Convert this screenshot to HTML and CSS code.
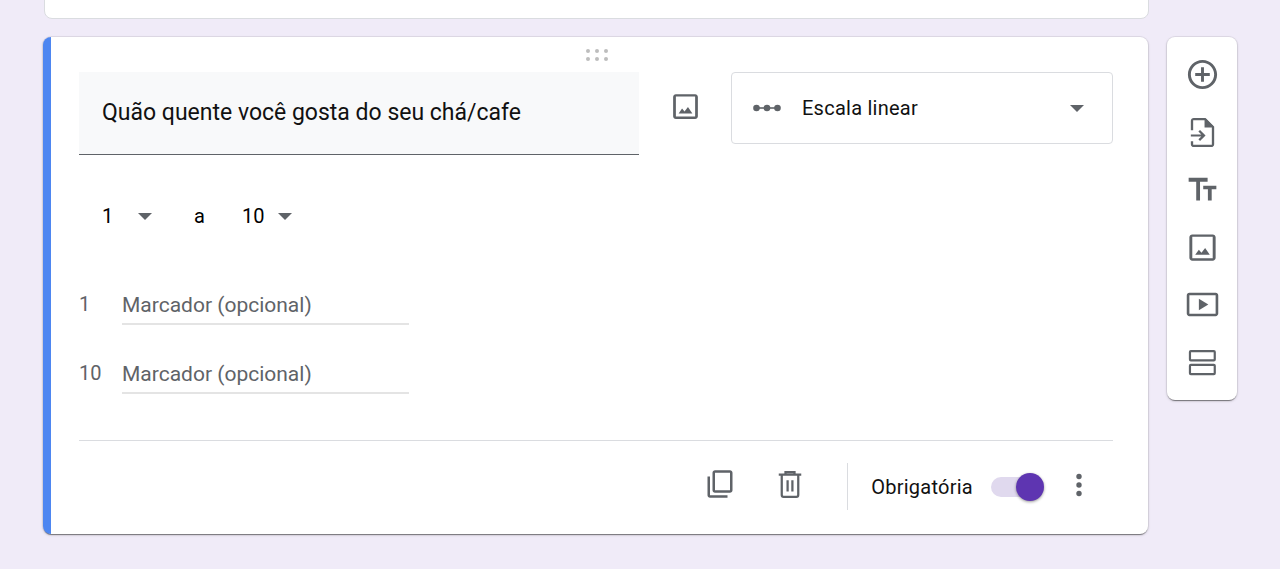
FILE: index.html
```html
<!DOCTYPE html>
<html lang="pt">
<head>
    <meta charset="UTF-8">
    <meta name="viewport" content="width=device-width, initial-scale=1.0">
    <title>Editar pergunta</title>
    <link rel="stylesheet" href="styles.css">
</head>
<body>
    <div class="previous-card"></div>

    <div class="editor">
        <div class="question-card">
            <div class="drag-handle">
                <svg width="24" height="14" viewBox="0 0 24 14">
                    <circle cx="3" cy="3" r="2"/><circle cx="12" cy="3" r="2"/><circle cx="21" cy="3" r="2"/>
                    <circle cx="3" cy="11" r="2"/><circle cx="12" cy="11" r="2"/><circle cx="21" cy="11" r="2"/>
                </svg>
            </div>

            <div class="title-row">
                <div class="title-field">Quão quente você gosta do seu chá/cafe</div>
                <button class="icon-btn title-image">
                    <svg class="icon" width="33" height="33" viewBox="0 0 24 24"><path d="M19 4.700v14.600H5V4.700h14M19 3H5c-1.100 0-2 .9-2 2v14c0 1.100.9 2 2 2h14c1.100 0 2-.9 2-2V5c0-1.100-.9-2-2-2z"/><path d="M13.800 12.300l-2.500 3.300-1.800-2.100L7 17h10z"/></svg>
                </button>
                <div class="type-select">
                    <svg class="icon" width="28" height="8" viewBox="0 0 28 8"><path d="M3 3.200h22v1.600H3z"/><circle cx="3.500" cy="4" r="3.300"/><circle cx="14" cy="4" r="3.300"/><circle cx="24.500" cy="4" r="3.300"/></svg>
                    <span class="type-name">Escala linear</span>
                    <span class="caret"></span>
                </div>
            </div>

            <div class="range-row">
                <span class="range-value">1</span>
                <span class="caret"></span>
                <span class="range-sep">a</span>
                <span class="range-value">10</span>
                <span class="caret"></span>
            </div>

            <div class="marker-row">
                <span class="marker-num">1</span>
                <div class="marker-input">Marcador (opcional)</div>
            </div>
            <div class="marker-row">
                <span class="marker-num">10</span>
                <div class="marker-input">Marcador (opcional)</div>
            </div>

            <div class="card-footer">
                <button class="icon-btn">
                    <svg class="icon" width="30" height="30" viewBox="0 0 24 24"><path d="M4 6H2v15c0 1.100.9 2 2 2h14v-2H4V6z"/><path d="M20 1H8c-1.100 0-2 .9-2 2v14c0 1.100.9 2 2 2h12c1.100 0 2-.9 2-2V3c0-1.100-.9-2-2-2zm0 16H8V3h12v14z"/></svg>
                </button>
                <button class="icon-btn">
                    <svg class="icon-line" width="36" height="36" viewBox="0 0 24 24"><path d="M6.500 6.500v12.800c0 .7.5 1.200 1.200 1.200h8.600c.7 0 1.200-.5 1.200-1.200V6.500M4.500 5.700h15M9 5.700V4h6v1.700M10.400 9.500v7.500M13.600 9.500v7.500"/></svg>
                </button>
                <div class="footer-divider"></div>
                <span class="required-label">Obrigatória</span>
                <div class="toggle"><span class="toggle-thumb"></span></div>
                <button class="icon-btn more-btn">
                    <svg class="icon" width="6" height="24" viewBox="0 0 6 24"><circle cx="3" cy="3.500" r="2.700"/><circle cx="3" cy="12" r="2.700"/><circle cx="3" cy="20.500" r="2.700"/></svg>
                </button>
            </div>
        </div>

        <div class="side-panel">
            <svg class="icon" width="35" height="35" viewBox="0 0 24 24"><path d="M13 7h-2v4H7v2h4v4h2v-4h4v-2h-4V7zm-1-5C6.480 2 2 6.480 2 12s4.480 10 10 10 10-4.480 10-10S17.520 2 12 2zm0 18c-4.410 0-8-3.590-8-8s3.590-8 8-8 8 3.590 8 8-3.590 8-8 8z"/></svg>
            <svg class="icon" width="35" height="35" viewBox="0 0 24 24"><path d="M14 2H6c-1.100 0-2 .9-2 2v6.500h1.600V3.600H13.400V8.600h5v11.800H5.600V18H4v2c0 1.100.9 2 2 2h12c1.100 0 2-.9 2-2V8l-6-6z"/><path d="M14 2l6 6h-6z"/><path d="M4 13.300h7.200l-2-2 1.100-1.100 3.800 3.800-3.800 3.800-1.100-1.100 2-2H4z"/></svg>
            <svg class="icon" width="35" height="35" viewBox="0 0 24 24"><path d="M2.500 4v2.600h5.200V19.500h2.600V6.600h5.200V4h-13zm19 5.500h-9v2.400h3.200v7.600h2.600v-7.600h3.200V9.500z"/></svg>
            <svg class="icon" width="35" height="35" viewBox="0 0 24 24"><path d="M19 4.700v14.600H5V4.700h14M19 3H5c-1.100 0-2 .9-2 2v14c0 1.100.9 2 2 2h14c1.100 0 2-.9 2-2V5c0-1.100-.9-2-2-2z"/><path d="M13.800 12.300l-2.500 3.300-1.800-2.100L7 17h10z"/></svg>
            <svg class="icon" width="35" height="35" viewBox="0 0 24 24"><path d="M3 4h18c1 0 1.800.8 1.800 1.800v12.400c0 1-.8 1.800-1.800 1.800H3c-1 0-1.800-.8-1.800-1.800V5.800C1.200 4.800 2 4 3 4zm0 1.600v12.800h18V5.600H3z"/><path d="M9.500 8l6.500 4-6.500 4z"/></svg>
            <svg class="icon-line" width="35" height="35" viewBox="0 0 24 24"><rect x="3.400" y="4.200" width="17" height="6.400" rx=".6"/><rect x="3.400" y="13.600" width="17" height="6.400" rx=".6"/></svg>
        </div>
    </div>
</body>
</html>
```

FILE: styles.css
```css
html, body {
    height: 100%;
}

body {
    margin: 0;
    overflow: hidden;
    background-color: #f0ebf8;
    font-family: Roboto, Arial, sans-serif;
    color: #111;
}

button {
    border: none;
    background: none;
    padding: 0;
}

.icon {
    display: block;
    fill: #5f6368;
}

.icon-line {
    display: block;
    fill: none;
    stroke: #5f6368;
    stroke-width: 1.5;
}

.caret {
    width: 0;
    height: 0;
    border-left: 7.5px solid transparent;
    border-right: 7.5px solid transparent;
    border-top: 7px solid #5f6368;
}

.previous-card {
    width: 1103px;
    height: 40px;
    margin: -23px 0 18px 44px;
    background-color: #fff;
    border: 1px solid #dadce0;
    border-radius: 8px;
}

.editor {
    display: flex;
    align-items: flex-start;
    gap: 19px;
    margin-left: 43px;
}

.question-card {
    width: 1034px;
    height: 497px;
    padding: 0 35px 0 28px;
    flex-shrink: 0;
    background-color: #fff;
    border-left: 8px solid #4d86f1;
    border-radius: 8px;
    box-shadow: 0 0 0 1px rgba(0, 0, 0, 0.06), 0 2px 1px -1px rgba(0, 0, 0, 0.4), 0 1px 3px 0 rgba(0, 0, 0, 0.18);
}

.drag-handle {
    display: flex;
    justify-content: center;
    height: 35px;
    padding-top: 11px;
    padding-left: 1px;
    box-sizing: border-box;
}

.drag-handle svg {
    fill: #bdbdbd;
}

.title-row {
    display: flex;
    align-items: flex-start;
}

.title-field {
    width: 537px;
    height: 82px;
    padding-left: 23px;
    line-height: 82px;
    font-size: 23px;
    background-color: #f8f9fa;
    border-bottom: 1px solid #5f6368;
}

.title-image {
    margin: 18px 0 0 30px;
}

.type-select {
    display: flex;
    align-items: center;
    width: 331px;
    height: 70px;
    margin-left: 29px;
    padding: 0 28px 0 21px;
    border: 1px solid #dadce0;
    border-radius: 4px;
}

.type-name {
    flex: 1;
    margin-left: 21px;
    font-size: 20px;
    letter-spacing: 0.25px;
}

.range-row {
    display: flex;
    align-items: center;
    height: 24px;
    margin-top: 49px;
    padding-left: 23px;
    font-size: 20px;
    color: #000;
}

.range-value {
    width: 35.5px;
}

.range-sep {
    width: 11px;
    margin: 0 37px 0 42.5px;
}

.marker-row {
    display: flex;
    align-items: flex-start;
    height: 69px;
    color: #5f6368;
    font-size: 20px;
}

.range-row + .marker-row {
    margin-top: 60px;
}

.marker-num {
    width: 43px;
    line-height: 32px;
}

.marker-input {
    width: 287px;
    height: 37px;
    font-size: 21px;
    line-height: 34px;
    border-bottom: 2px solid #e4e4e4;
    box-sizing: border-box;
}

.card-footer {
    display: flex;
    align-items: center;
    justify-content: flex-end;
    height: 91px;
    margin-top: 14px;
    border-top: 1px solid #dadce0;
    padding-right: 31px;
}

.footer-divider {
    width: 1px;
    height: 47px;
    margin: 0 23px 0 39px;
    background-color: #dadce0;
}

.required-label {
    font-size: 20px;
    letter-spacing: 0.25px;
}

.toggle {
    position: relative;
    width: 39px;
    height: 20px;
    margin-left: 18px;
    margin-right: 32px;
    background-color: #e0d9ee;
    border-radius: 10px;
}

.toggle-thumb {
    position: absolute;
    top: -4px;
    right: -14px;
    width: 28px;
    height: 28px;
    background-color: #5e35b1;
    border-radius: 50%;
    box-shadow: 0 1px 3px rgba(0, 0, 0, 0.4);
}

.card-footer .icon-btn {
    margin-bottom: 5px;
}

.icon-btn + .icon-btn {
    margin-left: 37px;
}

.icon-btn.more-btn {
    margin-left: 14px;
    margin-bottom: 3px;
}

.side-panel {
    display: flex;
    flex-direction: column;
    align-items: center;
    justify-content: space-between;
    width: 70px;
    height: 363px;
    padding: 20px 0;
    box-sizing: border-box;
    flex-shrink: 0;
    background-color: #fff;
    border-radius: 8px;
    box-shadow: 0 0 0 1px rgba(0, 0, 0, 0.06), 0 2px 1px -1px rgba(0, 0, 0, 0.4), 0 1px 3px 0 rgba(0, 0, 0, 0.18);
}
```
